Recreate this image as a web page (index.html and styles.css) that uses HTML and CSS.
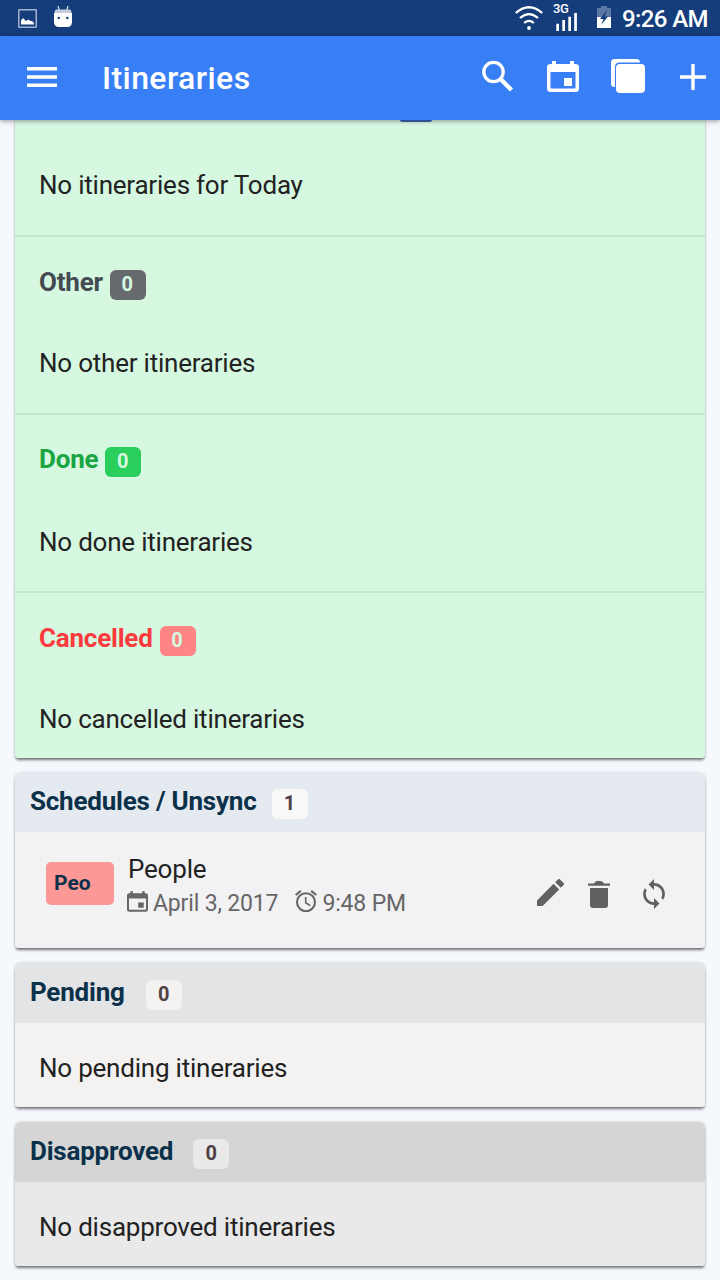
FILE: index.html
```html
<!DOCTYPE html>
<html lang="en">
<head>
<meta charset="utf-8">
<title>Itineraries</title>
<link rel="stylesheet" href="styles.css">
</head>
<body>
<div class="status">
  <svg class="s-image" width="19" height="19" viewBox="0 0 19 19"><rect x=".75" y=".75" width="17.500" height="17.500" rx=".5" fill="none" stroke="#a3b2ce" stroke-width="1.500"/><path d="M3 15.500v-4l2-2.500 3 3 2.500-1.500 2 1.500h1.500l2 2v1.500z" fill="#fff"/></svg>
  <svg class="s-robot" width="18" height="21" viewBox="0 0 18 21"><path d="M4 0l1.500 5M14 0l-1.500 5" stroke="#dce3ee" stroke-width="1.200"/><path d="M2.500 3.500h13q2 0 2 4h-17q0-4 2-4z" fill="#c4cddc"/><path d="M0 7h18v9q0 5-5 5H5q-5 0-5-5z" fill="#fff"/><circle cx="4.700" cy="12" r="1.200" fill="#153d7c"/><circle cx="13.300" cy="12" r="1.200" fill="#153d7c"/></svg>
  <svg class="s-wifi" width="28" height="24" viewBox="0 0 28 24" fill="none" stroke="#fff" stroke-width="2.300"><path d="M.8 7Q14-4.500 27.200 7M5 12Q14 4.200 23 12M9.200 17Q14 12.800 18.800 17"/><circle cx="14" cy="22" r="1.900" fill="#fff" stroke="none"/></svg>
  <div class="signal">
    <span class="net">3G</span>
    <svg width="21" height="18" viewBox="0 0 21 18" fill="#fff"><path d="M.3 10.700h2.700V18H.3zM6.300 7H9v11H6.300zM12.300 3.700H15V18h-2.700zM18.200 0h2.700v18h-2.700z"/></svg>
  </div>
  <svg class="s-battery" width="14" height="22" viewBox="0 0 14 22"><path d="M4 0h6v2h4v9H0V2h4z" fill="#5b77a3"/><path d="M0 11h14v11H0z" fill="#fff"/><path d="M10 4L3 13h3.500L4 19l7-8.500H7.500z" fill="#153d7c"/></svg>
  <span class="clock">9:26 AM</span>
</div>
<header class="toolbar">
  <svg class="menu" width="30" height="20" viewBox="0 0 30 20" fill="#fff"><path d="M0 .1h30v3.400H0zM0 8.300h30v3.400H0zM0 16.500h30v3.400H0z"/></svg>
  <h1 class="title">Itineraries</h1>
  <div class="actions">
    <svg width="32" height="32" viewBox="0 0 32 32" fill="none" stroke="#fff"><circle cx="11.500" cy="12" r="9.700" stroke-width="3.300"/><path d="M18.500 19l11 11" stroke-width="4.400"/></svg>
    <svg class="a-cal" width="32" height="31" viewBox="0 0 32 31" fill="#fff"><path fill-rule="evenodd" d="M5 0h4v3h14V0h4v3h1.500Q32 3 32 6v21.500q0 3.500-3.500 3.500h-25Q0 31 0 27.500V6q0-3 3.500-3H5zM3.500 11v15.500q0 1 1 1h23q1 0 1-1V11z"/><path d="M17 17h8v8h-8z"/></svg>
    <svg class="a-copy" width="34" height="34" viewBox="0 0 34 34" fill="#fff"><path d="M3.500 28Q0 28 0 24.500V3.500Q0 0 3.500 0h22Q29 0 29 3.500H8.500Q4 3.500 4 8v20z"/><rect x="5" y="5" width="29" height="29" rx="4"/></svg>
    <svg class="a-add" width="26" height="26" viewBox="0 0 26 26" fill="#fff"><path d="M11.300 0h3.400v11.300H26v3.400H14.700V26h-3.400V14.700H0v-3.400h11.300z"/></svg>
  </div>
</header>
<main class="content">
  <section class="card green">
    <div class="group today"><span class="sliver"></span><p class="empty">No itineraries for Today</p></div>
    <div class="group"><h2 class="sub other">Other <span class="badge">0</span></h2><p class="empty">No other itineraries</p></div>
    <div class="group done-group"><h2 class="sub done">Done <span class="badge">0</span></h2><p class="empty">No done itineraries</p></div>
    <div class="group last"><h2 class="sub cancelled">Cancelled <span class="badge">0</span></h2><p class="empty">No cancelled itineraries</p></div>
  </section>
  <section class="card unsync">
    <h2 class="head">Schedules / Unsync<span class="badge">1</span></h2>
    <div class="item">
      <span class="tag">Peo</span>
      <div class="info">
        <div class="name">People</div>
        <div class="meta">
          <svg class="m-cal" width="21" height="21" viewBox="0 0 32 31" fill="#666"><path fill-rule="evenodd" d="M5 0h4v3h14V0h4v3h1.500Q32 3 32 6v21.500q0 3.500-3.500 3.500h-25Q0 31 0 27.500V6q0-3 3.500-3H5zM3 11v15.500q0 1.500 1 1.500h24q1 0 1-1.500V11z"/><path d="M17 17h8.500v8H17z"/></svg>
          <span class="date">April 3, 2017</span>
          <svg class="m-clock" width="22" height="22" viewBox="0 0 22 22" fill="none" stroke="#666"><circle cx="11" cy="12.200" r="9" stroke-width="2.100"/><path d="M.7 5L5.800.9M21.300 5L16.200.9" stroke-width="2.200"/><path d="M10.700 7v5.800l4.500 2.700" stroke-width="1.600"/></svg>
          <span>9:48 PM</span>
        </div>
      </div>
      <div class="tools">
        <svg class="t-edit" width="27" height="27" viewBox="3 3 18 18" fill="#616161"><path d="M3 17.250V21h3.750L17.810 9.940l-3.750-3.750L3 17.250zM20.710 7.040a1 1 0 0 0 0-1.410l-2.340-2.340a1 1 0 0 0-1.410 0l-1.830 1.830 3.750 3.750 1.830-1.830z"/></svg>
        <svg class="t-delete" width="22" height="27" viewBox="0 0 22 27" fill="#616161"><path d="M2 7h18v17q0 3-3 3H5q-3 0-3-3zM0 2.500h6Q7.200 0 9 0h4q1.800 0 3 2.500h6v2.200H0z"/></svg>
        <svg class="t-sync" width="22" height="30" viewBox="4 1 16 22" fill="#616161"><path d="M12 4V1L8 5l4 4V6c3.310 0 6 2.690 6 6 0 1.010-.25 1.970-.7 2.800l1.460 1.460A7.930 7.930 0 0 0 20 12c0-4.420-3.580-8-8-8zm0 14c-3.310 0-6-2.690-6-6 0-1.010.25-1.970.7-2.800L5.240 7.740A7.930 7.930 0 0 0 4 12c0 4.420 3.580 8 8 8v3l4-4-4-4v3z"/></svg>
      </div>
    </div>
  </section>
  <section class="card pending">
    <h2 class="head">Pending<span class="badge">0</span></h2>
    <p class="empty">No pending itineraries</p>
  </section>
  <section class="card disapproved">
    <h2 class="head">Disapproved<span class="badge">0</span></h2>
    <p class="empty">No disapproved itineraries</p>
  </section>
</main>
</body>
</html>
```
FILE: styles.css
```css
* { box-sizing: border-box; }
body {
  margin: 0;
  height: 1280px;
  overflow: hidden;
  background: #f5f8fd;
  color: #222;
  font-family: Roboto, "Liberation Sans", sans-serif;
}
h1, h2, p { margin: 0; }
svg { display: block; flex: none; }
.status {
  display: flex;
  height: 36px;
  padding-left: 17.500px;
  background: #153d7c;
  color: #fff;
}
.s-image { margin-top: 8.500px; }
.s-robot { margin: 6px 0 0 17.500px; }
.s-wifi { margin: 6px 0 0 443px; }
.signal { width: 26px; margin: 4px 0 0 10px; }
.signal svg { margin: -1px 0 0 3px; }
.net { display: block; height: 10px; font-size: 13px; line-height: 10px; font-weight: 500; letter-spacing: -.5px; }
.s-battery { margin: 6px 0 0 18px; }
.clock { margin-left: 11px; font-size: 24px; line-height: 38px; font-weight: 500; letter-spacing: -.6px; white-space: nowrap; }
.toolbar {
  position: relative;
  display: flex;
  align-items: center;
  height: 84px;
  padding: 0 14px 2px 27px;
  background: #387ef5;
  color: #fff;
  box-shadow: 0 1px 5px rgba(0, 0, 0, .4);
}
.title { margin: 1px 0 0 45px; font-size: 32px; line-height: 40px; font-weight: 500; letter-spacing: .42px; }
.actions { display: flex; align-items: center; height: 34px; margin: 0 0 2px auto; }
.a-cal { margin-left: 33px; }
.a-copy { margin-left: 32px; }
.a-add { margin: 1px 0 0 35px; }
.content { display: flex; flex-direction: column; gap: 15px; padding: 0 15px; }
.card {
  overflow: visible;
  border-radius: 6px 6px 3px 3px;
  box-shadow: 0 3px 3px -1px rgba(0, 0, 0, .5), 0 0 3px rgba(0, 0, 0, .22);
}
.green { height: 638px; background: #d6f8e1; border-radius: 0 0 3px 3px; }
.group { height: 178px; padding: 25px 24px 0; border-bottom: 2px solid #c6e7d0; }
.done-group { height: 178px; padding-top: 24px; }
.today { height: 117px; padding-top: 0; }
.group.last { border: 0; height: auto; }
.sliver { display: block; width: 32px; height: 2px; margin-left: 361px; border-radius: 0 0 3px 3px; background: #3b66bd; }
.empty { font-size: 26px; line-height: 30px; letter-spacing: -.22px; white-space: nowrap; }
.today .empty { margin-top: 48px; }
.sub { display: flex; gap: 7px; height: 40px; font-size: 26px; line-height: 40px; font-weight: 700; letter-spacing: -.22px; }
.group .sub + .empty { margin-top: 46px; }
.done-group .sub + .empty { margin-top: 48px; }
.badge {
  width: 36px;
  height: 30px;
  border-radius: 6px;
  font-size: 20px;
  line-height: 28px;
  font-weight: 700;
  letter-spacing: 0;
  text-align: center;
}
.sub .badge { margin-top: 8px; color: #d6f8e1; padding-right: 1px; }
.other { color: #444a51; }
.other .badge { background: #666a6d; }
.done { color: #19a541; }
.done .badge { background: #29ce5b; }
.cancelled { color: #fb3b3d; }
.cancelled .badge { background: #ff8585; }
.head {
  display: flex;
  height: 59px;
  padding-left: 15px;
  border-radius: 6px 6px 0 0;
  color: #0b304a;
  font-size: 26px;
  line-height: 56px;
  font-weight: 700;
  letter-spacing: -.22px;
  white-space: nowrap;
}
.head .badge { margin-top: 16px; color: #4f4046; }
.unsync { height: 175px; background: #f2f2f4; }
.unsync .head { background: #e5e9f0; }
.unsync .badge { margin-left: 15px; background: #faf9fa; }
.item { display: flex; padding: 21px 39px 0 31px; }
.tag {
  width: 68px;
  height: 43px;
  margin-top: 9px;
  padding-left: 8px;
  border-radius: 5px;
  background: #fc9896;
  color: #0b304a;
  font-size: 21px;
  line-height: 42px;
  font-weight: 700;
}
.info { margin-left: 13px; }
.name { padding-left: 1px; font-size: 26px; line-height: 32px; letter-spacing: -.2px; }
.meta { display: flex; align-items: center; height: 34px; color: #666; font-size: 23px; letter-spacing: -.16px; white-space: nowrap; }
.meta span { margin: 2px 0 0 5px; }
.m-cal, .m-clock { margin-top: -2px; }
.meta .date { margin-right: 17px; }
.tools { display: flex; align-items: flex-start; height: 84px; margin: 0 1px 0 auto; }
.t-edit { margin-top: 26px; }
.t-delete { margin: 28px 0 0 24px; }
.t-sync { margin: 26px 0 0 33px; }
.pending { height: 144px; background: #f4f2f1; }
.pending .head { height: 60px; line-height: 58px; background: #e2e4e5; }
.pending .badge { margin-left: 21px; background: #f4f2f1; }
.head + .empty { margin: 30px 0 0 24px; }
.disapproved { height: 144px; background: #e9e9e9; }
.disapproved .head { height: 60px; line-height: 58px; background: #d5d5d5; }
.disapproved .badge { margin-left: 20px; background: #e9e9e9; }
.pending .head .badge, .disapproved .head .badge { margin-top: 16.500px; line-height: 29px; }
```
